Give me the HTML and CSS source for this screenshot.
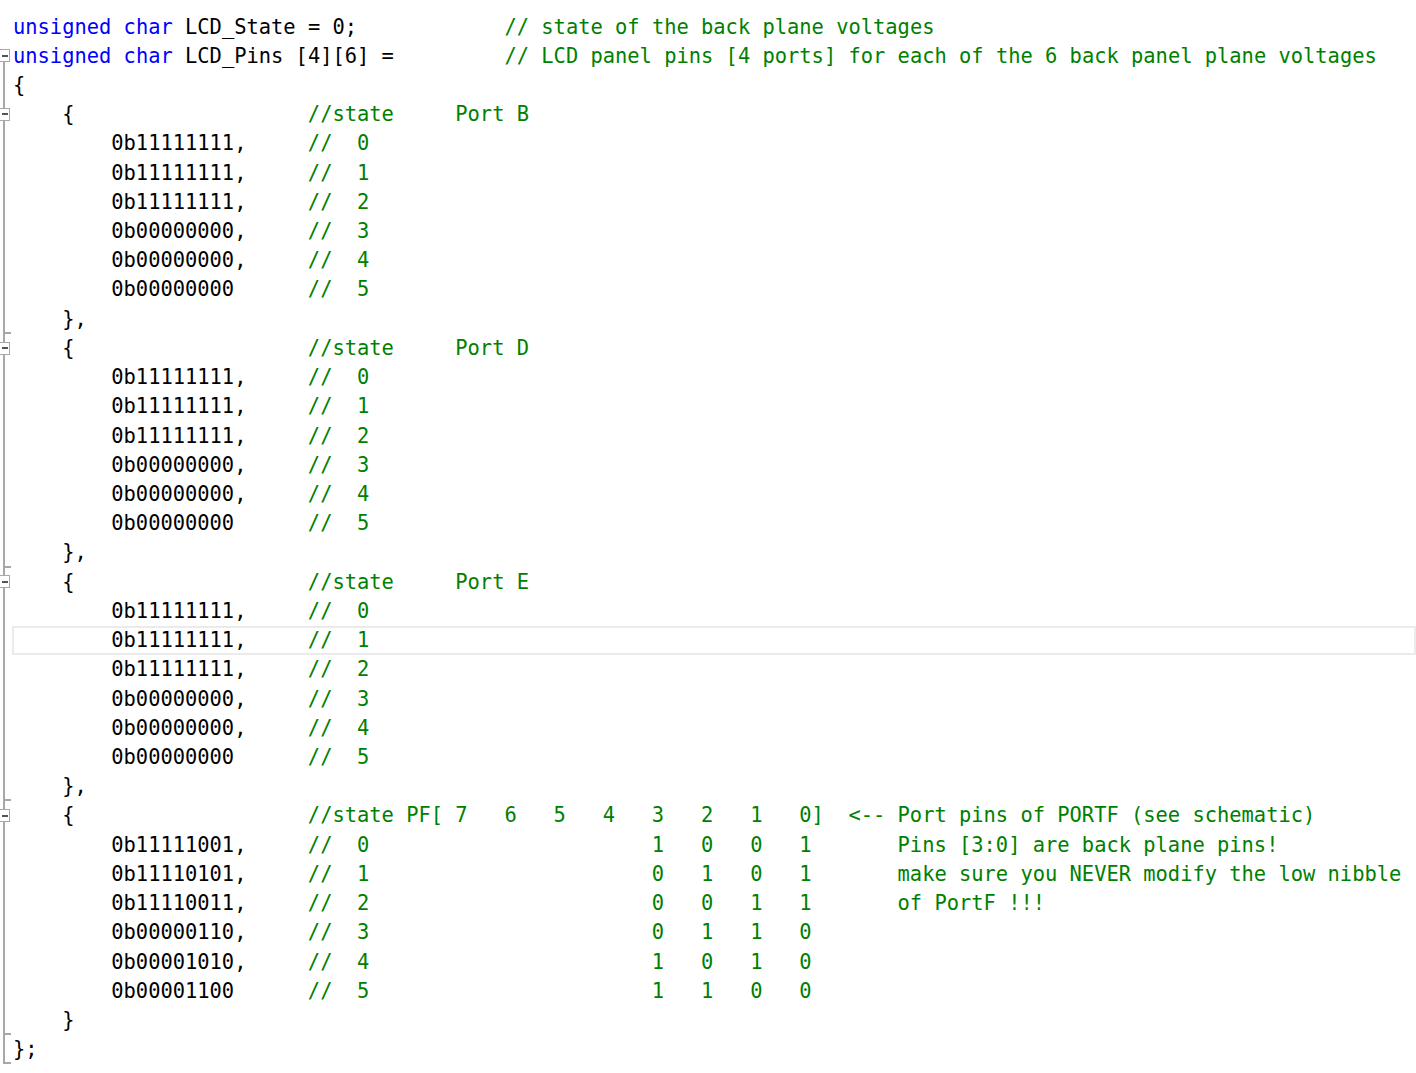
FILE: index.html
```html
<!DOCTYPE html>
<html>
<head>
<meta charset="utf-8">
<link rel="stylesheet" href="styles.css">
</head>
<body>
<div class="editor">
<div class="row"><div class="g"></div><div class="c"><span class="kw">unsigned</span> <span class="kw">char</span> LCD_State = 0;            <span class="cm">// state of the back plane voltages</span></div></div>
<div class="row"><div class="g g-first"></div><div class="c"><span class="kw">unsigned</span> <span class="kw">char</span> LCD_Pins [4][6] =         <span class="cm">// LCD panel pins [4 ports] for each of the 6 back panel plane voltages</span></div></div>
<div class="row"><div class="g g-v"></div><div class="c">{</div></div>

<div class="row"><div class="g g-v g-box"></div><div class="c">    {                   <span class="cm">//state     Port B</span></div></div>
<div class="row"><div class="g g-v"></div><div class="c">        0b11111111,     <span class="cm">//  0</span></div></div>
<div class="row"><div class="g g-v"></div><div class="c">        0b11111111,     <span class="cm">//  1</span></div></div>
<div class="row"><div class="g g-v"></div><div class="c">        0b11111111,     <span class="cm">//  2</span></div></div>
<div class="row"><div class="g g-v"></div><div class="c">        0b00000000,     <span class="cm">//  3</span></div></div>
<div class="row"><div class="g g-v"></div><div class="c">        0b00000000,     <span class="cm">//  4</span></div></div>
<div class="row"><div class="g g-v"></div><div class="c">        0b00000000      <span class="cm">//  5</span></div></div>
<div class="row"><div class="g g-v g-end"></div><div class="c">    },</div></div>

<div class="row"><div class="g g-v g-box"></div><div class="c">    {                   <span class="cm">//state     Port D</span></div></div>
<div class="row"><div class="g g-v"></div><div class="c">        0b11111111,     <span class="cm">//  0</span></div></div>
<div class="row"><div class="g g-v"></div><div class="c">        0b11111111,     <span class="cm">//  1</span></div></div>
<div class="row"><div class="g g-v"></div><div class="c">        0b11111111,     <span class="cm">//  2</span></div></div>
<div class="row"><div class="g g-v"></div><div class="c">        0b00000000,     <span class="cm">//  3</span></div></div>
<div class="row"><div class="g g-v"></div><div class="c">        0b00000000,     <span class="cm">//  4</span></div></div>
<div class="row"><div class="g g-v"></div><div class="c">        0b00000000      <span class="cm">//  5</span></div></div>
<div class="row"><div class="g g-v g-end"></div><div class="c">    },</div></div>

<div class="row"><div class="g g-v g-box"></div><div class="c">    {                   <span class="cm">//state     Port E</span></div></div>
<div class="row"><div class="g g-v"></div><div class="c">        0b11111111,     <span class="cm">//  0</span></div></div>
<div class="row"><div class="g g-v"></div><div class="c current">        0b11111111,     <span class="cm">//  1</span></div></div>
<div class="row"><div class="g g-v"></div><div class="c">        0b11111111,     <span class="cm">//  2</span></div></div>
<div class="row"><div class="g g-v"></div><div class="c">        0b00000000,     <span class="cm">//  3</span></div></div>
<div class="row"><div class="g g-v"></div><div class="c">        0b00000000,     <span class="cm">//  4</span></div></div>
<div class="row"><div class="g g-v"></div><div class="c">        0b00000000      <span class="cm">//  5</span></div></div>
<div class="row"><div class="g g-v g-end"></div><div class="c">    },</div></div>

<div class="row"><div class="g g-v g-box"></div><div class="c">    {                   <span class="cm">//state PF[ 7   6   5   4   3   2   1   0]  &lt;-- Port pins of PORTF (see schematic)</span></div></div>
<div class="row"><div class="g g-v"></div><div class="c">        0b11111001,     <span class="cm">//  0                       1   0   0   1       Pins [3:0] are back plane pins!</span></div></div>
<div class="row"><div class="g g-v"></div><div class="c">        0b11110101,     <span class="cm">//  1                       0   1   0   1       make sure you NEVER modify the low nibble</span></div></div>
<div class="row"><div class="g g-v"></div><div class="c">        0b11110011,     <span class="cm">//  2                       0   0   1   1       of PortF !!!</span></div></div>
<div class="row"><div class="g g-v"></div><div class="c">        0b00000110,     <span class="cm">//  3                       0   1   1   0</span></div></div>
<div class="row"><div class="g g-v"></div><div class="c">        0b00001010,     <span class="cm">//  4                       1   0   1   0</span></div></div>
<div class="row"><div class="g g-v"></div><div class="c">        0b00001100      <span class="cm">//  5                       1   1   0   0</span></div></div>
<div class="row"><div class="g g-v g-end"></div><div class="c">    }</div></div>
<div class="row"><div class="g g-v g-end"></div><div class="c">};</div></div>
</div>
</body>
</html>
```

FILE: styles.css
```css
html, body {
  margin: 0;
  padding: 0;
  background: #ffffff;
}

.editor {
  padding-top: 12.5px;
  font-family: "DejaVu Sans Mono", "Liberation Mono", monospace;
  font-size: 20.42px;
  line-height: 29.23px;
  color: #000000;
  width: 1416px;
  overflow: hidden;
}

.row {
  display: grid;
  grid-template-columns: 12px 1fr;
  height: 29.23px;
}

.g {
  position: relative;
}

.c {
  white-space: pre;
  padding-left: 1px;
}

.c.current {
  box-shadow: inset 0 0 0 2px #ebebeb;
}

.kw { color: #0000ff; }
.cm { color: #008000; }

/* outlining gutter */
.g-v::before {
  content: "";
  position: absolute;
  left: 3px;
  top: 0;
  bottom: 0;
  width: 2px;
  background: #a8a8a8;
}

.g-first::before {
  content: "";
  position: absolute;
  left: 3px;
  top: 50%;
  bottom: 0;
  width: 2px;
  background: #a8a8a8;
}

.g-first::after,
.g-box::after {
  content: "";
  position: absolute;
  left: -1px;
  top: 50%;
  width: 9px;
  height: 11px;
  margin-top: -7px;
  border: 1px solid #a8a8a8;
  background:
    linear-gradient(#555555, #555555) center / 6px 2px no-repeat,
    #ffffff;
}

.g-end::after {
  content: "";
  position: absolute;
  left: 3px;
  bottom: 0;
  width: 8px;
  height: 2px;
  background: #a8a8a8;
}
```
